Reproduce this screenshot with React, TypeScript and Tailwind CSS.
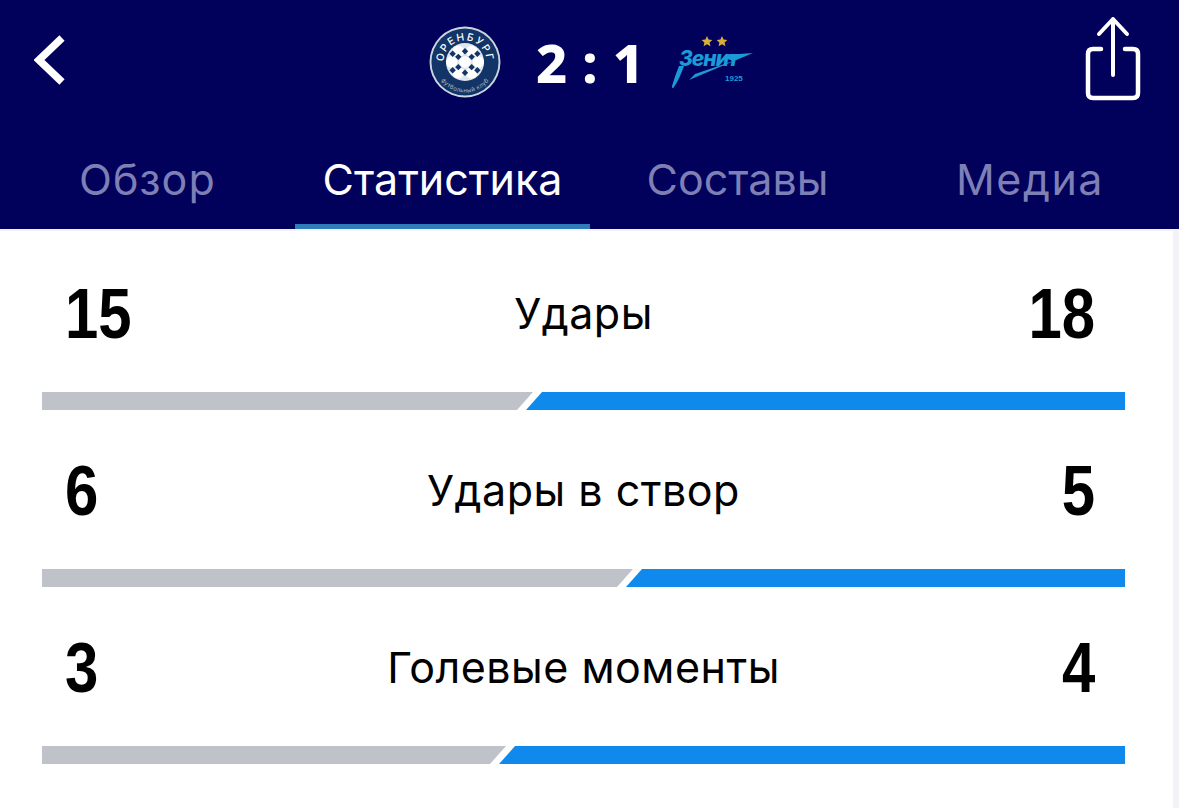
import React from "react";

const rows = [
  { l: "15", r: "18", t: "Удары", w: 491 },
  { l: "6", r: "5", t: "Удары в створ", w: 591 },
  { l: "3", r: "4", t: "Голевые моменты", w: 464 },
];

function OrenburgLogo() {
  const whites: [number, number][] = [
    [28.5, 24.5], [41.5, 24.5], [22, 35], [35, 35], [48, 35], [28.5, 45.5], [41.5, 45.5],
  ];
  const navy: [number, number][] = [
    [35, 24.5], [28.5, 30], [41.5, 30], [28.5, 40], [41.5, 40], [35, 45.5], [23, 27], [47, 27], [23, 43], [47, 43],
  ];
  return (
    <svg width="72" height="72" viewBox="0 0 70 70">
      <defs>
        <clipPath id="ball"><circle cx="35" cy="35" r="18.5" /></clipPath>
        <path id="orTop" d="M 15.2 42 A 21 21 0 1 1 54.8 42" />
        <path id="orBot" d="M 6.5 41 A 29 29 0 0 0 63.5 41" />
      </defs>
      <circle cx="35" cy="35" r="34.5" fill="#ccd5df" />
      <circle cx="35" cy="35" r="32.6" fill="#123466" />
      <circle cx="35" cy="35" r="18.5" fill="#dfe6ee" />
      <g clipPath="url(#ball)">
        {whites.map(([x, y]) => (
          <circle key={`${x}-${y}`} cx={x} cy={y} r="5.6" fill="#ffffff" />
        ))}
        {navy.map(([x, y]) => (
          <rect key={`${x}_${y}`} x={x - 2.2} y={y - 2.2} width="4.4" height="4.4" transform={`rotate(45 ${x} ${y})`} fill="#123466" />
        ))}
      </g>
      <text fill="#ffffff" fontSize="10" fontWeight="500" letterSpacing="1.6" style={{ fontFamily: '"Inter", sans-serif' }}>
        <textPath href="#orTop" startOffset="50%" textAnchor="middle">ОРЕНБУРГ</textPath>
      </text>
      <text fill="#a9bacd" fontSize="5.8" letterSpacing="0.3" style={{ fontFamily: '"Inter", sans-serif' }}>
        <textPath href="#orBot" startOffset="50%" textAnchor="middle">футбольный клуб</textPath>
      </text>
    </svg>
  );
}

function ZenitLogo() {
  return (
    <svg width="84" height="64" viewBox="0 0 84 64">
      <polygon fill="#d9ae3c" points="36,6 37.6,9.6 41.4,10 38.6,12.5 39.4,16.2 36,14.3 32.6,16.2 33.4,12.5 30.6,10 34.4,9.6" />
      <polygon fill="#d9ae3c" points="51,6 52.6,9.6 56.4,10 53.6,12.5 54.4,16.2 51,14.3 47.6,16.2 48.4,12.5 45.6,10 49.4,9.6" />
      <text x="8" y="36" fill="#1b9ad6" fontSize="21" fontWeight="800" fontStyle="italic" letterSpacing="-1" style={{ fontFamily: '"Inter", sans-serif' }}>Зенит</text>
      <polygon fill="#1b9ad6" points="82,23 54,25 54,28 62,31 24,44 18,50" />
      <path d="M13 36 Q8 50 3 57 Q1 60 1 56 Q4 46 8 36Z" fill="#1b9ad6" />
      <text x="54" y="51" fill="#1b9ad6" fontSize="8" fontWeight="700" style={{ fontFamily: '"Liberation Sans", sans-serif' }}>1925</text>
    </svg>
  );
}

export default function App() {
  return (
    <div className="w-[1179px] h-[808px] overflow-hidden bg-[#f2f2f7] flex flex-col" style={{ fontFamily: '"Inter", sans-serif' }}>
      <header className="h-[229px] bg-[#01005a] shrink-0 flex flex-col">
        <div className="h-[130px] pt-[10px] pl-[34px] pr-[37px] flex items-start">
          <svg width="32" height="50" viewBox="0 0 32 50" className="mt-[25px] shrink-0">
            <path d="M28 3 L5 25 L28 47" stroke="#fff" strokeWidth="7.5" fill="none" strokeLinejoin="miter" />
          </svg>
          <div className="flex items-center ml-[363px] mt-[16px] h-[72px]">
            <OrenburgLogo />
            <span className="ml-[35px] w-[108px] flex justify-between text-white text-[54px] font-extrabold leading-none" style={{ fontFamily: '"Noto Sans", sans-serif' }}>
              <span>2</span><span>:</span><span>1</span>
            </span>
            <span className="ml-[27px]"><ZenitLogo /></span>
          </div>
          <svg width="58" height="88" viewBox="0 0 58 88" className="mt-[6px] ml-auto shrink-0">
            <path d="M17 33 H9 Q4 33 4 38 V77 Q4 82 9 82 H49 Q54 82 54 77 V38 Q54 33 49 33 H41" stroke="#fff" strokeWidth="4.5" fill="none" strokeLinecap="round" />
            <path d="M29 59 V3 M15 18 L29 3 L43 18" stroke="#fff" strokeWidth="4" fill="none" strokeLinecap="round" strokeLinejoin="round" />
          </svg>
        </div>
        <nav className="h-[99px] flex items-start pt-[22px] text-[43px] leading-[54px] text-[#7d7fb5]">
          <div className="w-[295px] pl-[79px] tracking-[1px]">Обзор</div>
          <div className="w-[295px] h-[99px] -mt-[22px] pt-[22px] text-center text-white border-b-[5px] border-[#2f7cb8]">Статистика</div>
          <div className="w-[295px] text-center">Составы</div>
          <div className="flex-1 text-right pr-[75px] tracking-[1.5px]">Медиа</div>
        </nav>
      </header>
      <main className="w-[1173px] flex-1 bg-white mt-[2px]">
        {rows.map((r) => (
          <section key={r.t} className="h-[177px] pl-[42px] pt-[48px]">
            <div className="grid grid-cols-[1fr_auto_1fr] items-center h-[70px] w-[1083px] px-[24px]">
              <span className="text-[70px] font-bold leading-none text-black origin-left scale-x-[0.855] -ml-[1px]" style={{ fontFamily: '"Liberation Sans", sans-serif' }}>{r.l}</span>
              <span className="text-[43px] text-black leading-none -mt-[2px] tracking-[0.5px]">{r.t}</span>
              <span className="text-[70px] font-bold leading-none text-black text-right origin-right scale-x-[0.855] mr-[6px]" style={{ fontFamily: '"Liberation Sans", sans-serif' }}>{r.r}</span>
            </div>
            <div className="flex h-[18px] mt-[43px] w-[1083px]">
              <div className="h-full bg-[#bfc2c9] shrink-0 [clip-path:polygon(0_0,100%_0,calc(100%-16px)_100%,0_100%)]" style={{ width: r.w }} />
              <div className="h-full flex-1 -ml-[7px] bg-[#1089ec] [clip-path:polygon(16px_0,100%_0,100%_100%,0_100%)]" />
            </div>
          </section>
        ))}
      </main>
    </div>
  );
}
